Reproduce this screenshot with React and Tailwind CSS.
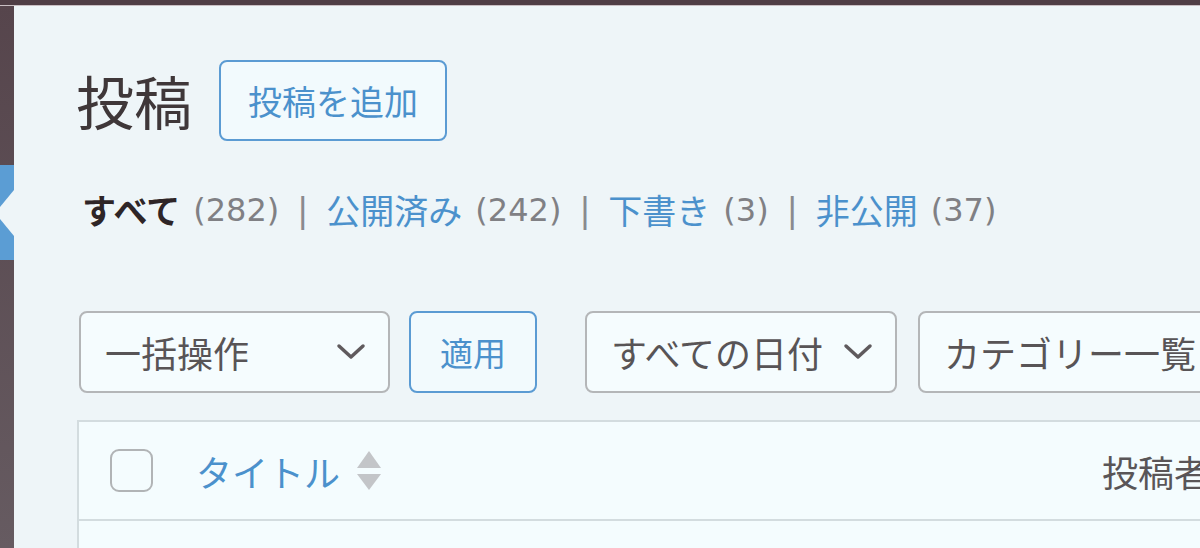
import React from "react";

const FONT = { fontFamily: '"Noto Sans CJK JP", "Noto Sans", sans-serif' };
const NUM = { fontFamily: '"DejaVu Sans", "Noto Sans", sans-serif' };

function Chevron() {
  return (
    <svg width="30" height="18" viewBox="0 0 30 18" className="shrink-0">
      <polyline points="3,3 15,14 27,3" fill="none" stroke="#5f5a5d" strokeWidth="3.5" strokeLinecap="round" strokeLinejoin="round" />
    </svg>
  );
}

function Select({ label, width, chevron = true }) {
  return (
    <div
      className="h-[82px] shrink-0 flex items-center justify-between rounded-[8px] border-2 border-[#b4b6b8] bg-[#f5fcfe] pl-[24px] pr-[22px] text-[36px] text-[#585456]"
      style={{ width }}
    >
      <span className="whitespace-nowrap leading-none">{label}</span>
      {chevron && <Chevron />}
    </div>
  );
}

function Sep() {
  return <span className="w-[47px] text-center text-[#8a8a8e]" style={NUM}>|</span>;
}

function Count({ n }) {
  return (
    <span className="ml-[13px] text-[32px] text-[#808084]" style={NUM}>
      ({n})
    </span>
  );
}

export default function App() {
  return (
    <div className="w-[1200px] h-[548px] overflow-hidden flex flex-col bg-[#eef5f8]" style={FONT}>
      <div className="h-[5px] shrink-0 bg-[#4f3e45]" />
      <div className="h-[1px] shrink-0 bg-[#c9bfc3]" />
      <div className="flex flex-1 min-h-0">
        <aside className="w-[14px] shrink-0 flex flex-col bg-gradient-to-b from-[#56454c] to-[#665b61]">
          <div className="h-[159px] shrink-0" />
          <div className="h-[95px] shrink-0 bg-[#5b9dd4] pt-[25px]">
            <svg width="14" height="46" viewBox="0 0 14 46" className="block">
              <polygon points="14,0 14,46 0,29 0,17" fill="#eef5f8" />
            </svg>
          </div>
          <div className="flex-1" />
        </aside>

        <main className="flex-1 min-w-0 pl-[62px] pt-[54px]">
          {/* heading row */}
          <div className="flex items-center">
            <h1 className="text-[58px] leading-[81px] text-[#3f3739] font-normal">投稿</h1>
            <button className="ml-[27px] h-[81px] px-[27px] rounded-[8px] border-2 border-[#5b9bd3] bg-[#f2fafd] text-[34px] text-[#4b91cc] leading-none">
              投稿を追加
            </button>
          </div>

          {/* status filter */}
          <div className="mt-[49px] flex items-center text-[34px] leading-[40px] whitespace-nowrap pl-[6px]">
            <span className="text-[#2e2527] font-semibold">すべて</span>
            <Count n="282" />
            <Sep />
            <span className="text-[#4b91cc]">公開済み</span>
            <Count n="242" />
            <Sep />
            <span className="text-[#4b91cc]">下書き</span>
            <Count n="3" />
            <Sep />
            <span className="text-[#4b91cc]">非公開</span>
            <Count n="37" />
          </div>

          {/* toolbar */}
          <div className="mt-[81px] flex items-center pl-[3px]">
            <Select label="一括操作" width={311} />
            <button className="ml-[19px] h-[82px] w-[128px] shrink-0 rounded-[8px] border-2 border-[#5b9bd3] bg-[#f2fafd] text-[33px] text-[#4b91cc] leading-none">
              適用
            </button>
            <div className="ml-[48px]">
              <Select label="すべての日付" width={312} />
            </div>
            <div className="ml-[21px]">
              <Select label="カテゴリー一覧" width={340} chevron={false} />
            </div>
          </div>

          {/* table */}
          <div className="mt-[27px] ml-[1px] w-[1200px] border-2 border-[#d3dcdf] bg-[#f4fcfe]">
            <div className="h-[99px] flex items-center border-b-2 border-[#d3dcdf]">
              <div className="ml-[31px] w-[43px] h-[43px] shrink-0 rounded-[9px] border-2 border-[#b1b4b6] bg-[#f4fcfe]" />
              <div className="ml-[43px] w-[906px] shrink-0 flex items-center">
                <span className="text-[36px] leading-none text-[#4b91cc]">タイトル</span>
                <svg width="24" height="40" viewBox="0 0 24 40" className="ml-[17px] shrink-0">
                  <polygon points="12,0 24,17 0,17" fill="#c3c5c8" />
                  <polygon points="0,23 24,23 12,39" fill="#c3c5c8" />
                </svg>
              </div>
              <span className="text-[36px] leading-none text-[#595557] whitespace-nowrap">投稿者</span>
            </div>
            <div className="h-[60px]" />
          </div>
        </main>
      </div>
    </div>
  );
}
